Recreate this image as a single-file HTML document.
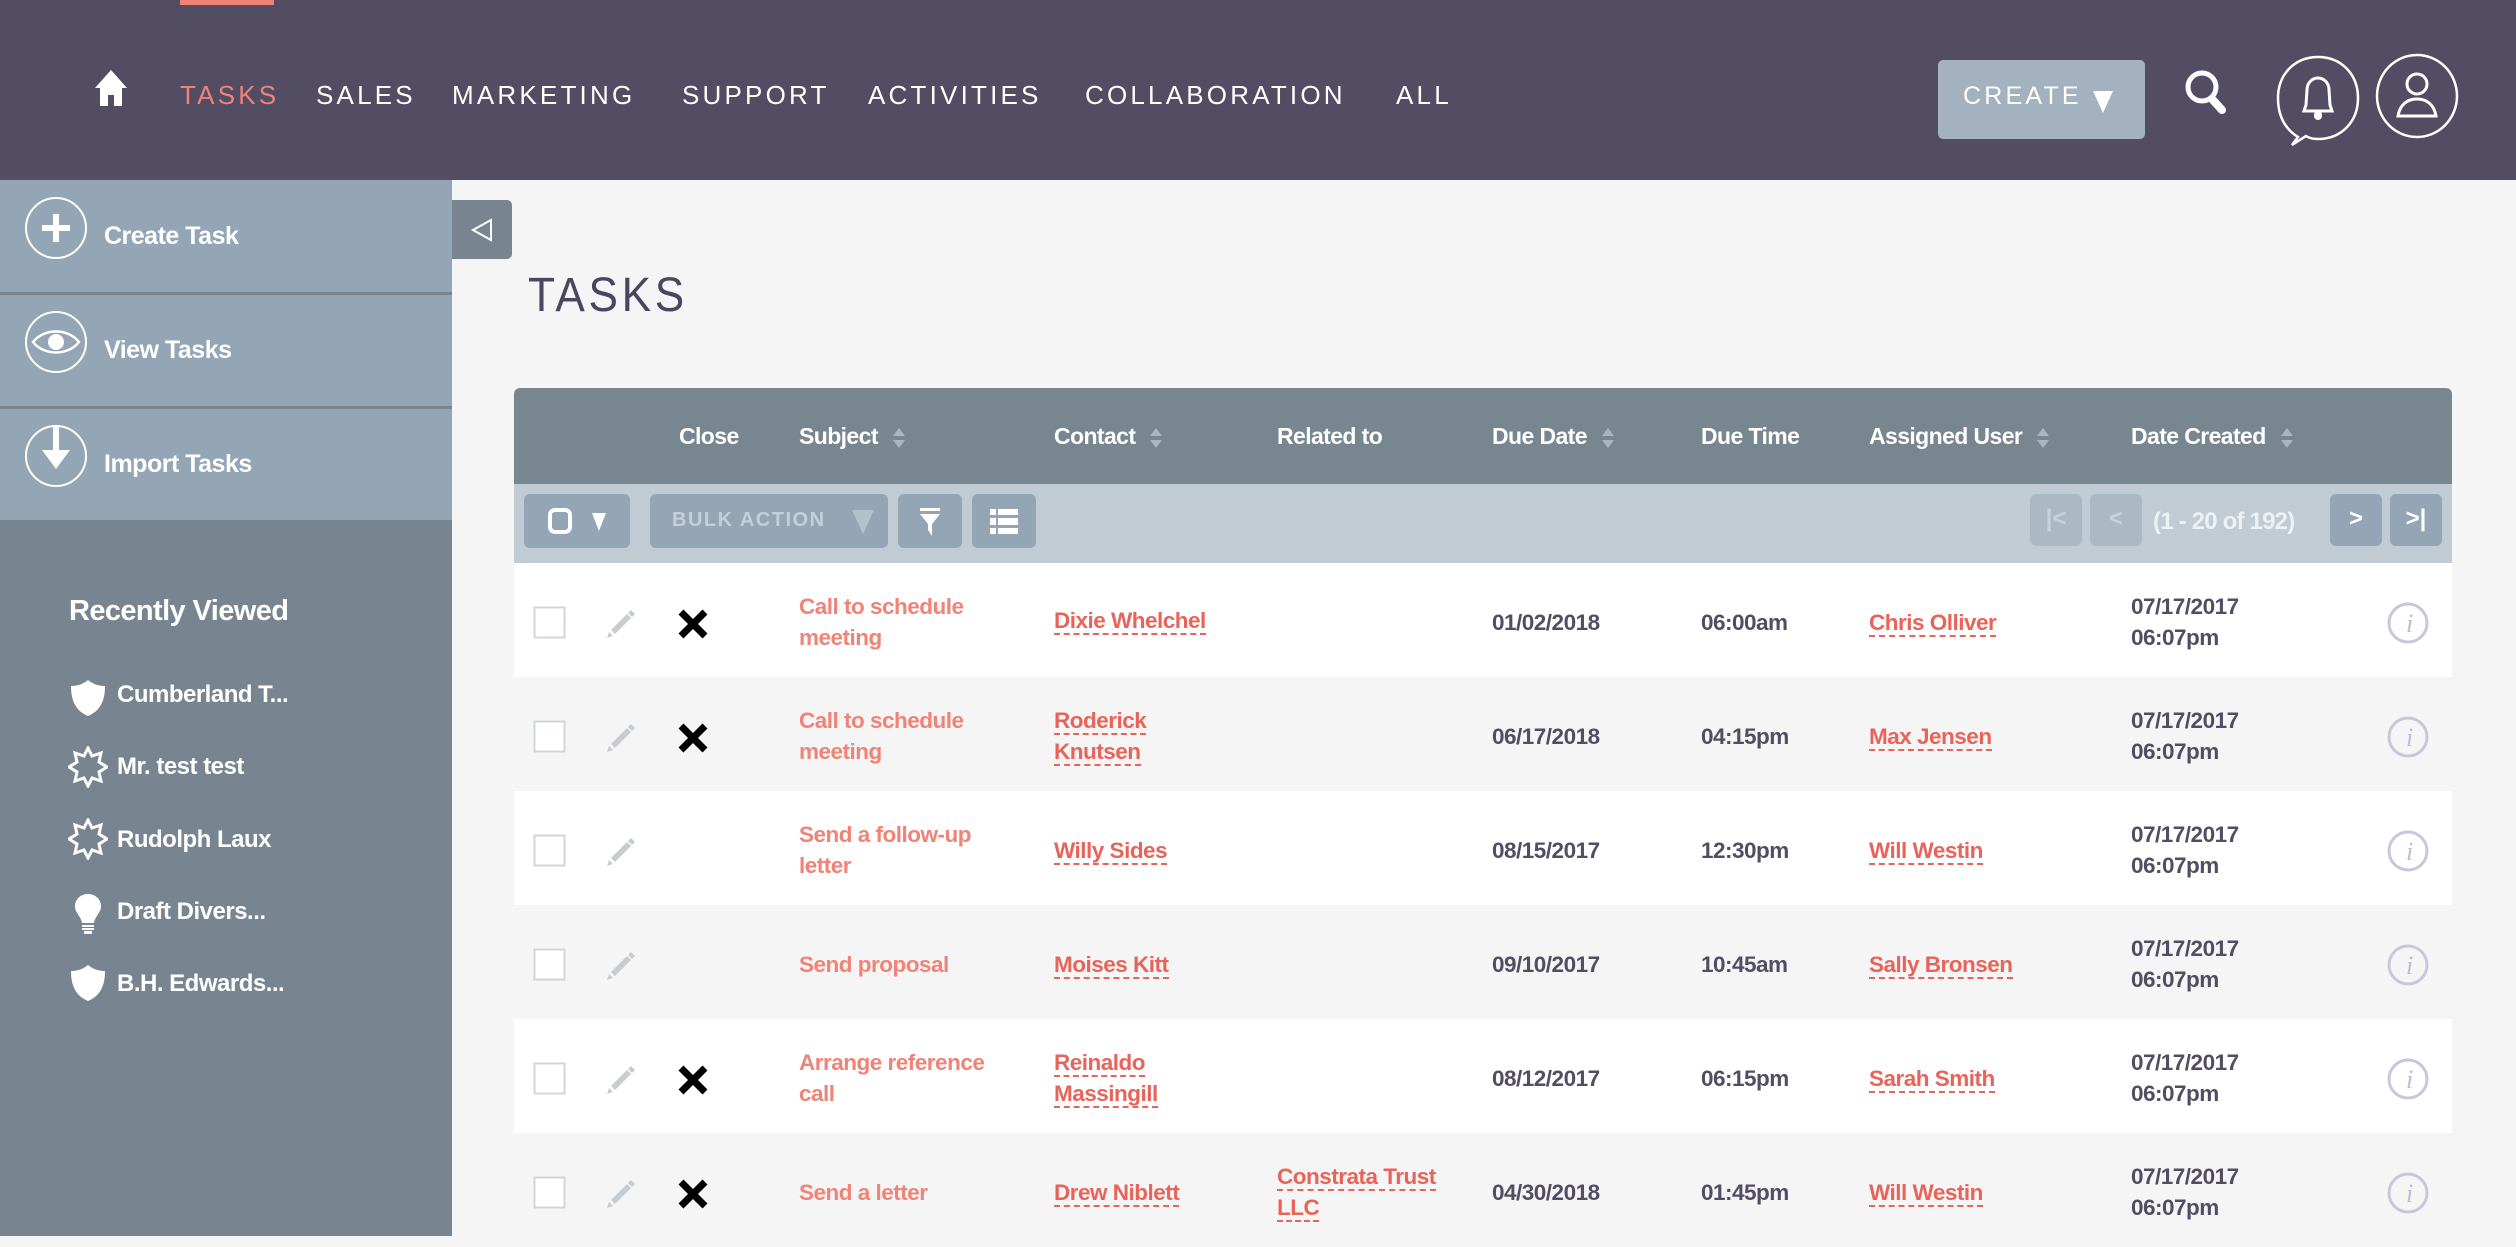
<!DOCTYPE html>
<html><head><meta charset="utf-8"><style>
*{margin:0;padding:0;box-sizing:border-box}
body{width:2516px;height:1236px;overflow:hidden;background:#f5f5f5;font-family:"Liberation Sans",sans-serif;position:relative}
.a{position:absolute}
#hdr{left:0;top:0;width:2516px;height:180px;background:#534d64}
.nav{top:80px;font-size:26px;color:#fff;letter-spacing:3.2px;white-space:nowrap}
#side1{left:0;top:180px;width:452px;height:340px;background:#94a6b5}
#side2{left:0;top:520px;width:452px;height:716px;background:#788591}
.sep{left:0;width:452px;height:3px;background:#788591}
.si{left:104px;font-size:25px;font-weight:bold;color:#fff;letter-spacing:-0.5px}
.rv{left:117px;font-size:24px;font-weight:bold;color:#fff;letter-spacing:-0.5px}
.th{top:423px;font-size:23px;font-weight:bold;color:#fff;letter-spacing:-0.6px;white-space:nowrap}
.row{left:514px;width:1938px;height:114px}
.t{font-size:22.5px;font-weight:bold;letter-spacing:-0.5px;line-height:31px;white-space:nowrap}
.o{color:#f08377}
.l{color:#e8645a;border-bottom:2px dashed #e8645a}
.d{color:#534d64}
.btn{background:#94a6b5;border-radius:6px;top:494px;height:54px}
.pb{top:494px;height:52px;width:52px;border-radius:6px;color:#fff;font-weight:bold;font-size:24px;text-align:center;line-height:50px}
.sort{display:inline-block;margin-left:14px;vertical-align:middle}
</style></head><body>
<div class="a" id="hdr"></div>
<div class="a" style="left:180px;top:0;width:94px;height:5px;background:#f08377"></div>
<svg class="a" style="left:93px;top:68px" width="36" height="40" viewBox="0 0 36 40"><path d="M18 2 L34 20 L29 20 L29 38 L21 38 L21 27 L15 27 L15 38 L7 38 L7 20 L2 20 Z" fill="#fff"/></svg>
<div class="a nav" style="left:180px;color:#f08377">TASKS</div>
<div class="a nav" style="left:316px">SALES</div>
<div class="a nav" style="left:452px">MARKETING</div>
<div class="a nav" style="left:682px">SUPPORT</div>
<div class="a nav" style="left:868px">ACTIVITIES</div>
<div class="a nav" style="left:1085px">COLLABORATION</div>
<div class="a nav" style="left:1396px">ALL</div>
<div class="a" style="left:1938px;top:60px;width:207px;height:79px;background:#a3b2be;border-radius:5px"></div>
<div class="a nav" style="left:1963px;top:82px;font-size:25px">CREATE</div>
<svg class="a" style="left:2093px;top:91px" width="20" height="22"><path d="M0 0 L20 0 L10 22 Z" fill="#fff"/></svg>
<svg class="a" style="left:2180px;top:66px" width="56" height="52"><circle cx="22" cy="21" r="14" fill="none" stroke="#fff" stroke-width="5"/><line x1="32" y1="33" x2="42" y2="44" stroke="#fff" stroke-width="8" stroke-linecap="round"/></svg>
<svg class="a" style="left:2272px;top:54px" width="96" height="96"><path d="M26 83 C10 73 6 58 6 44 C6 20 23 3 46 3 C69 3 86 20 86 44 C86 68 69 85 46 85 C40 85 37 84 34 82 L20 91 Z" fill="none" stroke="#fff" stroke-width="2.5"/><path d="M32 57 L34 51 L35 36 C35 29 40 24 46 24 C52 24 57 29 57 36 L58 51 L60 57 Z" fill="none" stroke="#fff" stroke-width="3"/><rect x="42" y="57" width="8" height="9" rx="4" fill="#fff"/></svg>
<svg class="a" style="left:2374px;top:52px" width="86" height="88"><ellipse cx="43" cy="44" rx="40" ry="41" fill="none" stroke="#fff" stroke-width="2.5"/><circle cx="43" cy="32" r="10" fill="none" stroke="#fff" stroke-width="3"/><path d="M24 64 C26 52 34 47 43 47 C52 47 60 52 62 64 Z" fill="none" stroke="#fff" stroke-width="3"/></svg>

<div class="a" id="side1"></div>
<div class="a" id="side2"></div>
<div class="a sep" style="top:292px"></div>
<div class="a sep" style="top:406px"></div>
<svg class="a" style="left:24px;top:196px" width="66" height="66"><circle cx="32" cy="32" r="30" fill="none" stroke="#fff" stroke-width="2"/><path d="M32 18 V46 M18 32 H46" stroke="#fff" stroke-width="6"/></svg>
<div class="a si" style="top:222px">Create Task</div>
<svg class="a" style="left:24px;top:310px" width="66" height="66"><circle cx="32" cy="32" r="30" fill="none" stroke="#fff" stroke-width="2"/><path d="M9 32 C20 18 44 18 55 32 C44 46 20 46 9 32 Z" fill="none" stroke="#fff" stroke-width="2.5"/><circle cx="32" cy="32" r="8" fill="#fff"/></svg>
<div class="a si" style="top:336px">View Tasks</div>
<svg class="a" style="left:24px;top:424px" width="66" height="66"><circle cx="32" cy="32" r="30" fill="none" stroke="#fff" stroke-width="2"/><path d="M29 2 H35 V26 H46 L32 45 L18 26 H29 Z" fill="#fff"/></svg>
<div class="a si" style="top:450px">Import Tasks</div>
<div class="a" style="left:69px;top:595px;font-size:29px;font-weight:bold;color:#fff;letter-spacing:-0.6px">Recently Viewed</div>
<svg class="a" style="left:70px;top:679px" width="36" height="38"><path d="M18 1 C12 6 6 7 1 7 C1 22 6 32 18 37 C30 32 35 22 35 7 C30 7 24 6 18 1 Z" fill="#fff"/></svg>
<div class="a rv" style="top:681px">Cumberland T...</div>
<svg class="a" style="left:68px;top:746px" width="40" height="42"><path d="M20 2 L24 10 L33 7 L31 16 L39 21 L31 26 L33 35 L24 32 L20 40 L16 32 L7 35 L9 26 L1 21 L9 16 L7 7 L16 10 Z" fill="none" stroke="#fff" stroke-width="3"/></svg>
<div class="a rv" style="top:753px">Mr. test test</div>
<svg class="a" style="left:68px;top:818px" width="40" height="42"><path d="M20 2 L24 10 L33 7 L31 16 L39 21 L31 26 L33 35 L24 32 L20 40 L16 32 L7 35 L9 26 L1 21 L9 16 L7 7 L16 10 Z" fill="none" stroke="#fff" stroke-width="3"/></svg>
<div class="a rv" style="top:826px">Rudolph Laux</div>
<svg class="a" style="left:74px;top:893px" width="28" height="42"><path d="M14 1 C6 1 1 7 1 13 C1 20 7 23 8 30 H20 C21 23 27 20 27 13 C27 7 22 1 14 1 Z" fill="#fff"/><rect x="8" y="32" width="12" height="2" fill="#fff"/><rect x="8" y="35" width="12" height="2" fill="#fff"/><rect x="10" y="38" width="8" height="3" fill="#fff"/></svg>
<div class="a rv" style="top:898px">Draft Divers...</div>
<svg class="a" style="left:70px;top:964px" width="36" height="38"><path d="M18 1 C12 6 6 7 1 7 C1 22 6 32 18 37 C30 32 35 22 35 7 C30 7 24 6 18 1 Z" fill="#fff"/></svg>
<div class="a rv" style="top:970px">B.H. Edwards...</div>

<div class="a" style="left:452px;top:200px;width:60px;height:59px;background:#788591;border-radius:0 5px 5px 0"></div>
<svg class="a" style="left:470px;top:218px" width="24" height="24"><path d="M21 2 L3 12 L21 22 Z" fill="none" stroke="#fff" stroke-width="2"/></svg>
<div class="a" style="left:528px;top:268px;font-size:48px;color:#4a4560;letter-spacing:4px;font-weight:normal;transform:scaleX(0.92);transform-origin:left">TASKS</div>

<div class="a" style="left:514px;top:388px;width:1938px;height:96px;background:#788690;border-radius:6px 6px 0 0"></div>
<div class="a" style="left:514px;top:484px;width:1938px;height:79px;background:#c0cbd3"></div>
<div class="a th" style="left:679px">Close</div>
<div class="a th" style="left:799px">Subject<svg class="sort" width="14" height="24"><path d="M7 2 L13 10 H1 Z M1 14 H13 L7 22 Z" fill="#aab5be"/></svg></div>
<div class="a th" style="left:1054px">Contact<svg class="sort" width="14" height="24"><path d="M7 2 L13 10 H1 Z M1 14 H13 L7 22 Z" fill="#aab5be"/></svg></div>
<div class="a th" style="left:1277px">Related to</div>
<div class="a th" style="left:1492px">Due Date<svg class="sort" width="14" height="24"><path d="M7 2 L13 10 H1 Z M1 14 H13 L7 22 Z" fill="#aab5be"/></svg></div>
<div class="a th" style="left:1701px">Due Time</div>
<div class="a th" style="left:1869px">Assigned User<svg class="sort" width="14" height="24"><path d="M7 2 L13 10 H1 Z M1 14 H13 L7 22 Z" fill="#aab5be"/></svg></div>
<div class="a th" style="left:2131px">Date Created<svg class="sort" width="14" height="24"><path d="M7 2 L13 10 H1 Z M1 14 H13 L7 22 Z" fill="#aab5be"/></svg></div>

<div class="a btn" style="left:524px;width:106px"></div>
<svg class="a" style="left:548px;top:507px" width="64" height="28"><rect x="2" y="3" width="20" height="22" rx="5" fill="none" stroke="#fff" stroke-width="4"/><path d="M44 6 H58 L51 24 Z" fill="#fff"/></svg>
<div class="a btn" style="left:650px;width:238px"></div>
<div class="a" style="left:672px;top:509px;font-size:20px;font-weight:bold;color:#c5cfd7;letter-spacing:1.5px">BULK ACTION</div>
<svg class="a" style="left:852px;top:510px" width="22" height="24"><path d="M0 0 H22 L11 24 Z" fill="#b5c1ca"/></svg>
<div class="a btn" style="left:898px;width:64px"></div>
<svg class="a" style="left:918px;top:506px" width="24" height="32"><rect x="2" y="2" width="20" height="3" fill="#fff"/><path d="M2 8 H22 L14 18 V30 L10 24 V18 Z" fill="#fff"/></svg>
<div class="a btn" style="left:972px;width:64px"></div>
<svg class="a" style="left:990px;top:509px" width="28" height="26"><rect x="0" y="0" width="6" height="6" fill="#fff"/><rect x="8" y="0" width="20" height="6" fill="#fff"/><rect x="0" y="9" width="6" height="7" fill="#fff"/><rect x="8" y="9" width="20" height="7" fill="#fff"/><rect x="0" y="19" width="6" height="6" fill="#fff"/><rect x="8" y="19" width="20" height="6" fill="#fff"/></svg>
<div class="a pb" style="left:2030px;background:#abb9c4;color:#c8d2da">|&lt;</div>
<div class="a pb" style="left:2090px;background:#abb9c4;color:#c8d2da">&lt;</div>
<div class="a" style="left:2153px;top:508px;font-size:24px;font-weight:bold;color:#eef1f4;letter-spacing:-0.8px">(1 - 20 of 192)</div>
<div class="a pb" style="left:2330px;background:#94a6b5">&gt;</div>
<div class="a pb" style="left:2390px;background:#94a6b5">&gt;|</div>

<div class="a row" style="top:563px;background:#fff"></div>
<div class="a row" style="top:677px;background:#f5f5f5"></div>
<div class="a row" style="top:791px;background:#fff"></div>
<div class="a row" style="top:905px;background:#f5f5f5"></div>
<div class="a row" style="top:1019px;background:#fff"></div>
<div class="a row" style="top:1133px;background:#f5f5f5"></div>

<svg class="a" style="left:0;top:0" width="2516" height="1236">
<defs>
<g id="cb"><rect x="0.5" y="0.5" width="30" height="30" fill="#fff" stroke="#d0d6dc" stroke-width="2"/></g>
<g id="pn"><path d="M4 26 L2 32 L8 30 Z M6 24 L22 8 L26 12 L10 28 Z M23 7 L26 4 L30 8 L27 11 Z" fill="#c7ccd1"/></g>
<g id="x"><path d="M3 3 L27 27 M27 3 L3 27" stroke="#000" stroke-width="7"/></g>
<g id="inf"><circle cx="0" cy="0" r="19" fill="none" stroke="#c9c6dc" stroke-width="3"/><text x="-2" y="9" font-family="Liberation Serif" font-style="italic" font-size="26" fill="#c0bdd3">i</text></g>
</defs>
<use href="#cb" x="534" y="607"/><use href="#pn" x="605" y="606"/><use href="#x" x="678" y="609"/><use href="#inf" x="2408" y="623"/>
<use href="#cb" x="534" y="721"/><use href="#pn" x="605" y="720"/><use href="#x" x="678" y="723"/><use href="#inf" x="2408" y="737"/>
<use href="#cb" x="534" y="835"/><use href="#pn" x="605" y="834"/><use href="#inf" x="2408" y="851"/>
<use href="#cb" x="534" y="949"/><use href="#pn" x="605" y="948"/><use href="#inf" x="2408" y="965"/>
<use href="#cb" x="534" y="1063"/><use href="#pn" x="605" y="1062"/><use href="#x" x="678" y="1065"/><use href="#inf" x="2408" y="1079"/>
<use href="#cb" x="534" y="1177"/><use href="#pn" x="605" y="1176"/><use href="#x" x="678" y="1179"/><use href="#inf" x="2408" y="1193"/>
</svg>

<div class="a t o" style="left:799px;top:591px">Call to schedule<br>meeting</div>
<div class="a t" style="left:1054px;top:605px"><span class="l">Dixie Whelchel</span></div>
<div class="a t d" style="left:1492px;top:607px">01/02/2018</div>
<div class="a t d" style="left:1701px;top:607px">06:00am</div>
<div class="a t" style="left:1869px;top:607px"><span class="l">Chris Olliver</span></div>
<div class="a t d" style="left:2131px;top:591px">07/17/2017<br>06:07pm</div>

<div class="a t o" style="left:799px;top:705px">Call to schedule<br>meeting</div>
<div class="a t" style="left:1054px;top:705px"><span class="l">Roderick</span><br><span class="l">Knutsen</span></div>
<div class="a t d" style="left:1492px;top:721px">06/17/2018</div>
<div class="a t d" style="left:1701px;top:721px">04:15pm</div>
<div class="a t" style="left:1869px;top:721px"><span class="l">Max Jensen</span></div>
<div class="a t d" style="left:2131px;top:705px">07/17/2017<br>06:07pm</div>

<div class="a t o" style="left:799px;top:819px">Send a follow-up<br>letter</div>
<div class="a t" style="left:1054px;top:835px"><span class="l">Willy Sides</span></div>
<div class="a t d" style="left:1492px;top:835px">08/15/2017</div>
<div class="a t d" style="left:1701px;top:835px">12:30pm</div>
<div class="a t" style="left:1869px;top:835px"><span class="l">Will Westin</span></div>
<div class="a t d" style="left:2131px;top:819px">07/17/2017<br>06:07pm</div>

<div class="a t o" style="left:799px;top:949px">Send proposal</div>
<div class="a t" style="left:1054px;top:949px"><span class="l">Moises Kitt</span></div>
<div class="a t d" style="left:1492px;top:949px">09/10/2017</div>
<div class="a t d" style="left:1701px;top:949px">10:45am</div>
<div class="a t" style="left:1869px;top:949px"><span class="l">Sally Bronsen</span></div>
<div class="a t d" style="left:2131px;top:933px">07/17/2017<br>06:07pm</div>

<div class="a t o" style="left:799px;top:1047px">Arrange reference<br>call</div>
<div class="a t" style="left:1054px;top:1047px"><span class="l">Reinaldo</span><br><span class="l">Massingill</span></div>
<div class="a t d" style="left:1492px;top:1063px">08/12/2017</div>
<div class="a t d" style="left:1701px;top:1063px">06:15pm</div>
<div class="a t" style="left:1869px;top:1063px"><span class="l">Sarah Smith</span></div>
<div class="a t d" style="left:2131px;top:1047px">07/17/2017<br>06:07pm</div>

<div class="a t o" style="left:799px;top:1177px">Send a letter</div>
<div class="a t" style="left:1054px;top:1177px"><span class="l">Drew Niblett</span></div>
<div class="a t" style="left:1277px;top:1161px"><span class="l">Constrata Trust</span><br><span class="l">LLC</span></div>
<div class="a t d" style="left:1492px;top:1177px">04/30/2018</div>
<div class="a t d" style="left:1701px;top:1177px">01:45pm</div>
<div class="a t" style="left:1869px;top:1177px"><span class="l">Will Westin</span></div>
<div class="a t d" style="left:2131px;top:1161px">07/17/2017<br>06:07pm</div>
</body></html>
